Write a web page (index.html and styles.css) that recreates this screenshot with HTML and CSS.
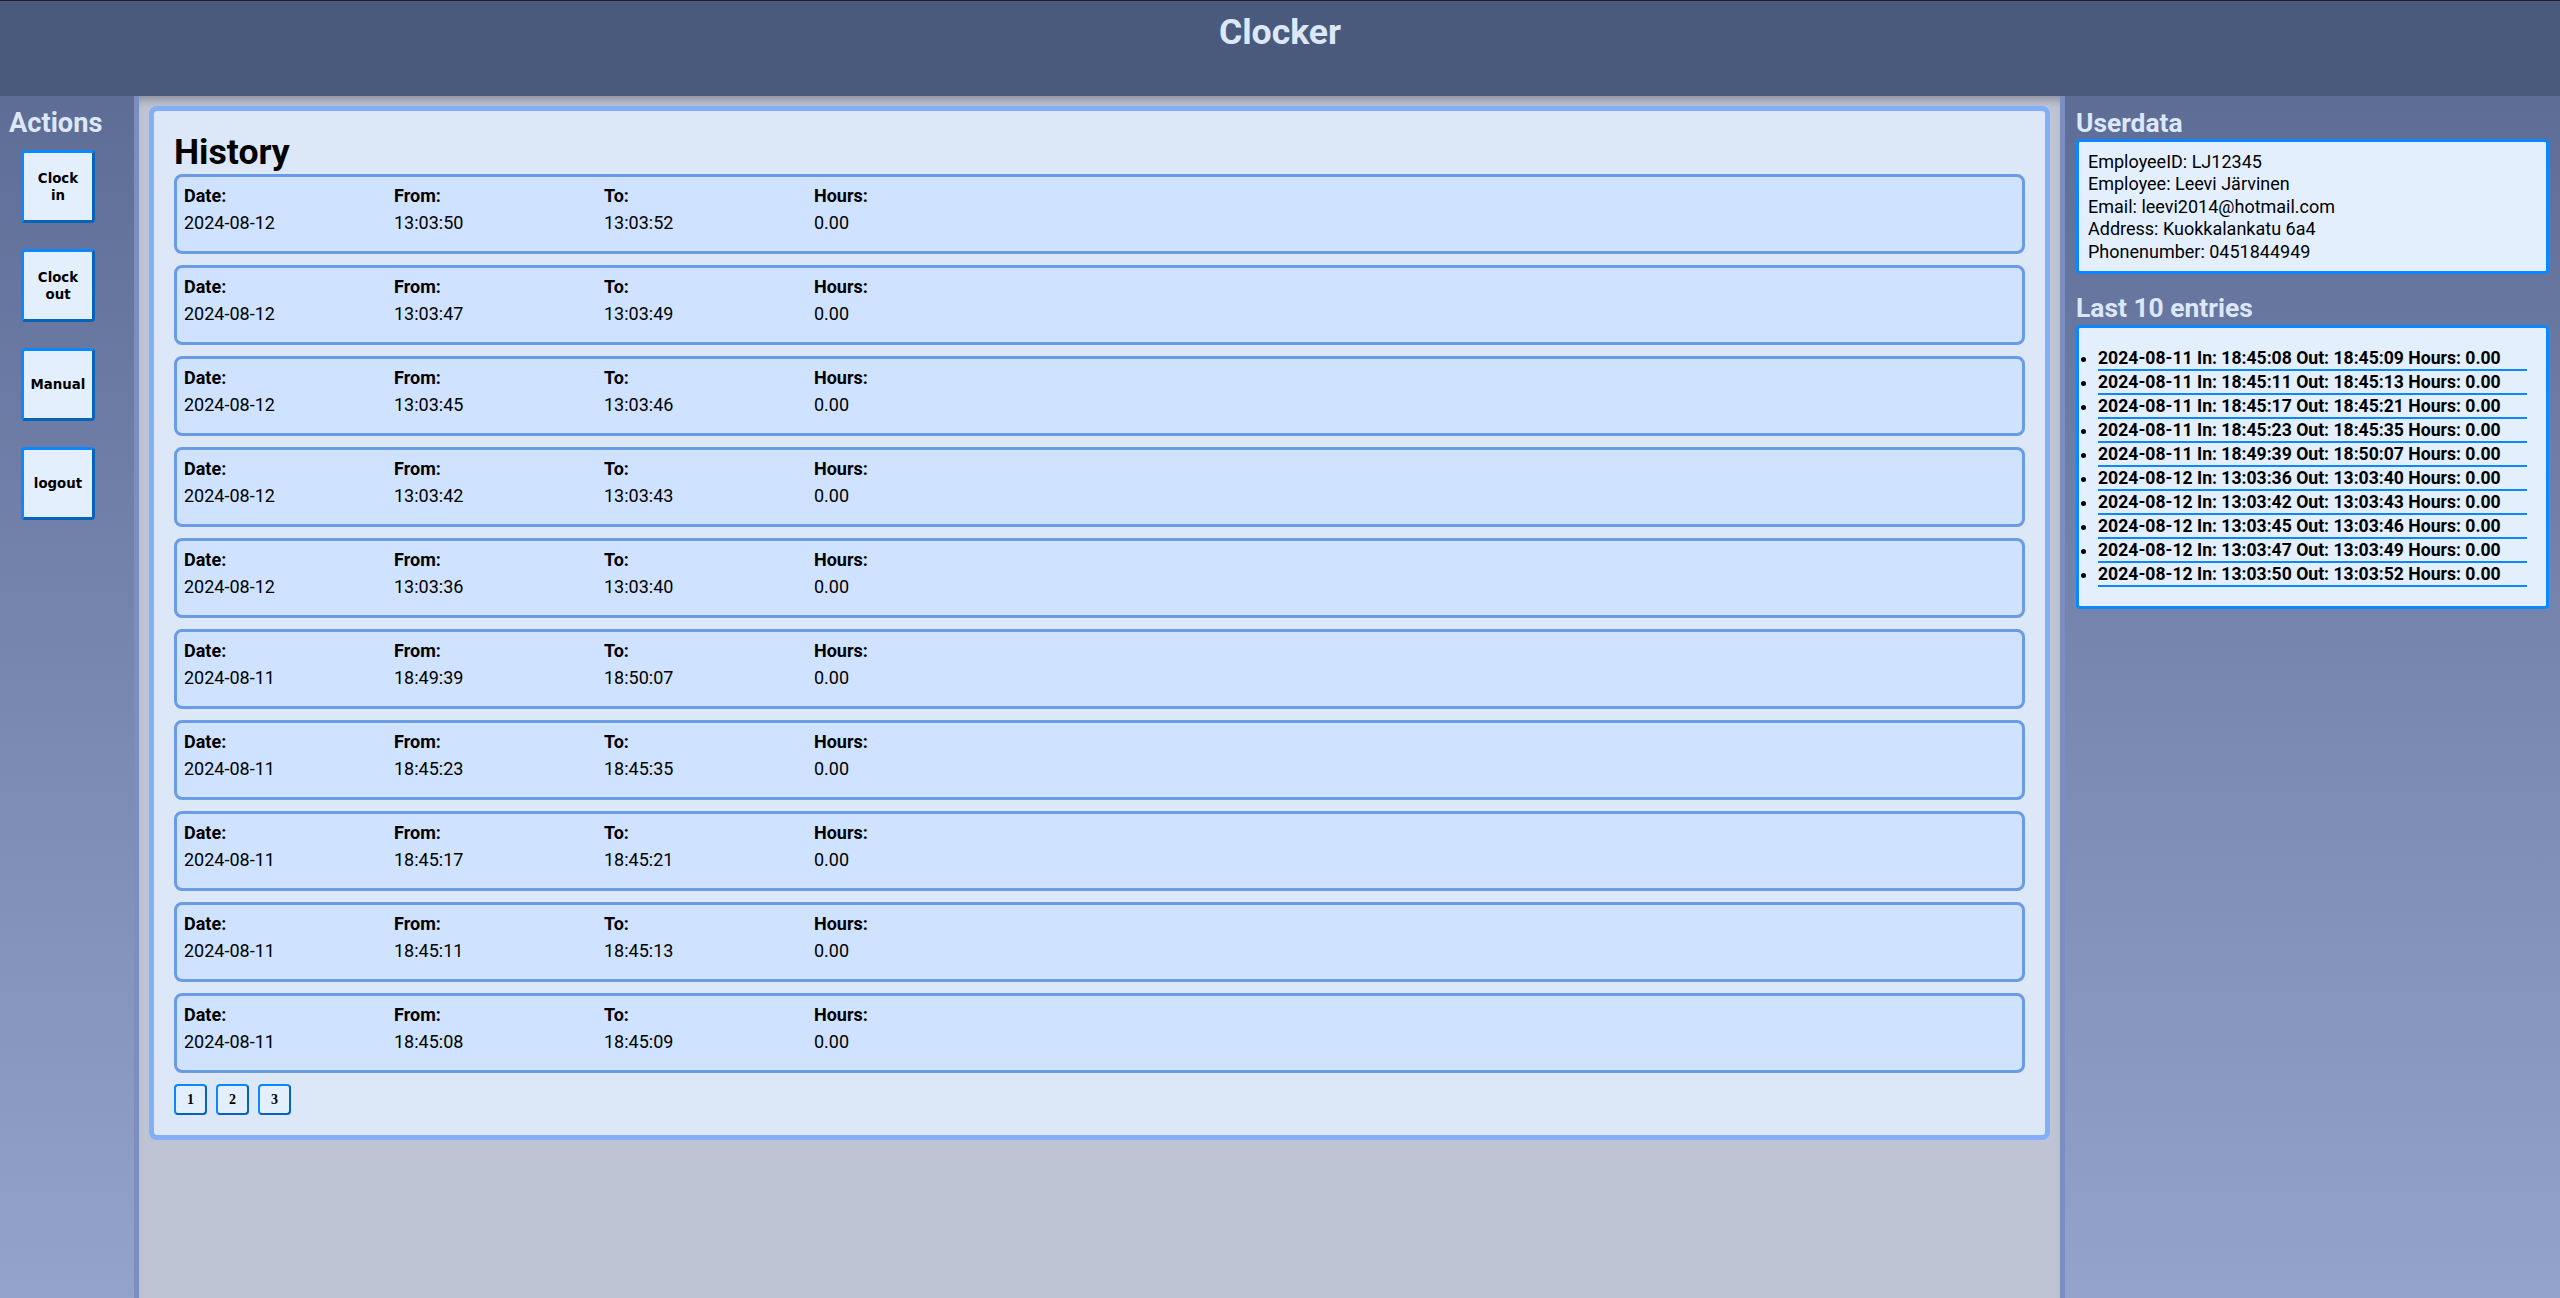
FILE: index.html
```html
<!DOCTYPE html>
<html lang="en">
<head>
<meta charset="utf-8">
<title>Clocker</title>
<link rel="stylesheet" href="styles.css">
</head>
<body>
<header class="topbar">
  <h1 class="app-title">Clocker</h1>
</header>
<div class="layout">
  <aside class="sidebar sidebar-left">
    <h2 class="side-heading side-heading-actions">Actions</h2>
    <div class="actions">
      <button class="action-btn">Clock in</button>
      <button class="action-btn">Clock out</button>
      <button class="action-btn">Manual</button>
      <button class="action-btn">logout</button>
    </div>
  </aside>
  <main class="main">
    <section class="history-card">
      <h1 class="history-title">History</h1>
      <div class="entries">
        <div class="entry"><div class="col"><div class="label">Date:</div><div class="value">2024-08-12</div></div><div class="col"><div class="label">From:</div><div class="value">13:03:50</div></div><div class="col"><div class="label">To:</div><div class="value">13:03:52</div></div><div class="col"><div class="label">Hours:</div><div class="value">0.00</div></div></div>
        <div class="entry"><div class="col"><div class="label">Date:</div><div class="value">2024-08-12</div></div><div class="col"><div class="label">From:</div><div class="value">13:03:47</div></div><div class="col"><div class="label">To:</div><div class="value">13:03:49</div></div><div class="col"><div class="label">Hours:</div><div class="value">0.00</div></div></div>
        <div class="entry"><div class="col"><div class="label">Date:</div><div class="value">2024-08-12</div></div><div class="col"><div class="label">From:</div><div class="value">13:03:45</div></div><div class="col"><div class="label">To:</div><div class="value">13:03:46</div></div><div class="col"><div class="label">Hours:</div><div class="value">0.00</div></div></div>
        <div class="entry"><div class="col"><div class="label">Date:</div><div class="value">2024-08-12</div></div><div class="col"><div class="label">From:</div><div class="value">13:03:42</div></div><div class="col"><div class="label">To:</div><div class="value">13:03:43</div></div><div class="col"><div class="label">Hours:</div><div class="value">0.00</div></div></div>
        <div class="entry"><div class="col"><div class="label">Date:</div><div class="value">2024-08-12</div></div><div class="col"><div class="label">From:</div><div class="value">13:03:36</div></div><div class="col"><div class="label">To:</div><div class="value">13:03:40</div></div><div class="col"><div class="label">Hours:</div><div class="value">0.00</div></div></div>
        <div class="entry"><div class="col"><div class="label">Date:</div><div class="value">2024-08-11</div></div><div class="col"><div class="label">From:</div><div class="value">18:49:39</div></div><div class="col"><div class="label">To:</div><div class="value">18:50:07</div></div><div class="col"><div class="label">Hours:</div><div class="value">0.00</div></div></div>
        <div class="entry"><div class="col"><div class="label">Date:</div><div class="value">2024-08-11</div></div><div class="col"><div class="label">From:</div><div class="value">18:45:23</div></div><div class="col"><div class="label">To:</div><div class="value">18:45:35</div></div><div class="col"><div class="label">Hours:</div><div class="value">0.00</div></div></div>
        <div class="entry"><div class="col"><div class="label">Date:</div><div class="value">2024-08-11</div></div><div class="col"><div class="label">From:</div><div class="value">18:45:17</div></div><div class="col"><div class="label">To:</div><div class="value">18:45:21</div></div><div class="col"><div class="label">Hours:</div><div class="value">0.00</div></div></div>
        <div class="entry"><div class="col"><div class="label">Date:</div><div class="value">2024-08-11</div></div><div class="col"><div class="label">From:</div><div class="value">18:45:11</div></div><div class="col"><div class="label">To:</div><div class="value">18:45:13</div></div><div class="col"><div class="label">Hours:</div><div class="value">0.00</div></div></div>
        <div class="entry"><div class="col"><div class="label">Date:</div><div class="value">2024-08-11</div></div><div class="col"><div class="label">From:</div><div class="value">18:45:08</div></div><div class="col"><div class="label">To:</div><div class="value">18:45:09</div></div><div class="col"><div class="label">Hours:</div><div class="value">0.00</div></div></div>
      </div>
      <div class="pagination">
        <button class="page-btn">1</button>
        <button class="page-btn">2</button>
        <button class="page-btn">3</button>
      </div>
    </section>
  </main>
  <aside class="sidebar sidebar-right">
    <h2 class="side-heading">Userdata</h2>
    <div class="info-box userdata">
      <div>EmployeeID: LJ12345</div>
      <div>Employee: Leevi Järvinen</div>
      <div>Email: leevi2014@hotmail.com</div>
      <div>Address: Kuokkalankatu 6a4</div>
      <div>Phonenumber: 0451844949</div>
    </div>
    <h2 class="side-heading side-heading-spaced">Last 10 entries</h2>
    <div class="info-box">
      <ul class="last-list">
        <li>2024-08-11 In: 18:45:08 Out: 18:45:09 Hours: 0.00</li>
        <li>2024-08-11 In: 18:45:11 Out: 18:45:13 Hours: 0.00</li>
        <li>2024-08-11 In: 18:45:17 Out: 18:45:21 Hours: 0.00</li>
        <li>2024-08-11 In: 18:45:23 Out: 18:45:35 Hours: 0.00</li>
        <li>2024-08-11 In: 18:49:39 Out: 18:50:07 Hours: 0.00</li>
        <li>2024-08-12 In: 13:03:36 Out: 13:03:40 Hours: 0.00</li>
        <li>2024-08-12 In: 13:03:42 Out: 13:03:43 Hours: 0.00</li>
        <li>2024-08-12 In: 13:03:45 Out: 13:03:46 Hours: 0.00</li>
        <li>2024-08-12 In: 13:03:47 Out: 13:03:49 Hours: 0.00</li>
        <li>2024-08-12 In: 13:03:50 Out: 13:03:52 Hours: 0.00</li>
      </ul>
    </div>
  </aside>
</div>
</body>
</html>
```

FILE: styles.css
```css
* {
  box-sizing: border-box;
}

html, body {
  margin: 0;
  padding: 0;
}

body {
  font-family: Roboto, "Liberation Sans", sans-serif;
  font-size: 18px;
  color: #000;
  background: #bec4d3;
  min-height: 100vh;
  display: flex;
  flex-direction: column;
}

.topbar {
  height: 96px;
  flex: 0 0 96px;
  background: #4a5a7c;
  border-top: 1px solid #1c1f28;
  padding-top: 11px;
  text-align: center;
}

.app-title {
  margin: 0;
  font-size: 35.6px;
  font-weight: 700;
  color: #dce8fa;
  line-height: 41px;
}

.layout {
  flex: 1;
  display: flex;
  min-height: 1202px;
}

.sidebar {
  background: linear-gradient(to bottom, #5e6d95 0%, #94a3cc 100%);
  padding: 11px 10px;
}

.sidebar-left {
  width: 139px;
  flex: 0 0 139px;
  border-right: 5px solid #7a8ec0;
}

.sidebar-right {
  width: 500px;
  flex: 0 0 500px;
  border-left: 5px solid #7a8ec0;
  padding-left: 11px;
  padding-right: 11px;
}

.side-heading {
  margin: 0;
  font-size: 26.4px;
  font-weight: 700;
  line-height: 32px;
  color: #dce8fa;
}

.side-heading-actions {
  margin-left: -1px;
  font-size: 27.2px;
}

.side-heading-spaced {
  margin-top: 18px;
  margin-bottom: 1px;
}

.actions {
  display: flex;
  flex-direction: column;
  align-items: flex-start;
  gap: 26px;
  margin-top: 11px;
  padding-left: 11px;
}

.action-btn {
  width: 74px;
  height: 73px;
  padding: 0 6px;
  background: #e4effe;
  border: 3px solid;
  border-color: #0b88ff #0763b9 #0763b9 #0b88ff;
  border-radius: 4px;
  font-family: "DejaVu Sans", sans-serif;
  font-size: 13.33px;
  font-weight: 700;
  line-height: 17px;
  color: #000;
  text-align: center;
}

.main {
  flex: 1;
  min-width: 0;
  background: #bec4d3;
  box-shadow: inset 0 9px 9px -5px rgba(40, 45, 60, 0.35);
  padding: 10px 10px 0 10px;
}

.history-card {
  background: #dce8f8;
  border: 5px solid #82aefa;
  border-radius: 8px;
  padding: 20px;
}

.history-title {
  margin: 1px 0 1px 0;
  font-size: 35.6px;
  font-weight: 700;
  line-height: 41px;
}

.entries {
  display: flex;
  flex-direction: column;
  gap: 11px;
}

.entry {
  display: flex;
  height: 80px;
  background: #cfe2ff;
  border: 3px solid #6a9be6;
  border-radius: 8px;
  padding: 8px 7px 0 7px;
}

.col {
  width: 210px;
  display: flex;
  flex-direction: column;
  gap: 6px;
}

.label {
  font-weight: 700;
  line-height: 21px;
}

.value {
  line-height: 21px;
}

.pagination {
  display: flex;
  gap: 9px;
  margin-top: 11px;
}

.page-btn {
  width: 33px;
  height: 31px;
  padding: 0;
  background: #e4effe;
  border: 2px solid;
  border-color: #0b88ff #0763b9 #0763b9 #0b88ff;
  border-radius: 4px;
  font-family: "Liberation Serif", serif;
  font-size: 14px;
  font-weight: 700;
  color: #000;
}

.info-box {
  background: #e4effe;
  border: 3px solid #0b88ff;
  border-radius: 4px;
}

.userdata {
  padding: 9px 9px 8px 9px;
  line-height: 22.4px;
}

.last-list {
  margin: 19px 19px 19px 19px;
  padding: 0;
  list-style: disc;
  font-size: 17.6px;
}

.last-list li {
  font-weight: 700;
  line-height: 22px;
  border-bottom: 2px solid #0b88ff;
}
```
